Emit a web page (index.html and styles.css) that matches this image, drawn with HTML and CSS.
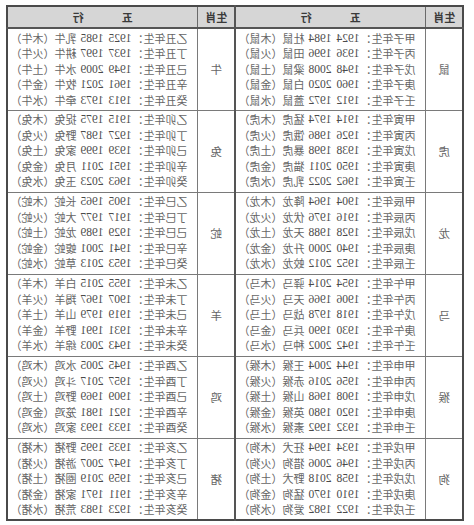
FILE: index.html
```html
<!DOCTYPE html>
<html lang="zh">
<head>
<meta charset="utf-8">
<title>生肖五行</title>
<link rel="stylesheet" href="styles.css">
</head>
<body>
<div class="sheet">
<table class="grid">
<colgroup><col class="c-z"><col class="c-l"><col class="c-z"><col class="c-l"></colgroup>
<thead>
<tr><th>生肖</th><th class="wx">五<span class="sp"></span>行</th><th class="split">生肖</th><th class="wx">五<span class="sp"></span>行</th></tr>
</thead>
<tbody>
<tr class="data">
<td class="zodiac">鼠</td>
<td class="list">
<div class="line"><span>甲子年生：</span><span class="n">1924</span><span class="n">1984</span><span>杜鼠（木鼠）</span></div>
<div class="line"><span>丙子年生：</span><span class="n">1936</span><span class="n">1996</span><span>田鼠（火鼠）</span></div>
<div class="line"><span>戊子年生：</span><span class="n">1948</span><span class="n">2008</span><span>粱鼠（土鼠）</span></div>
<div class="line"><span>庚子年生：</span><span class="n">1960</span><span class="n">2020</span><span>白鼠（金鼠）</span></div>
<div class="line"><span>壬子年生：</span><span class="n">1912</span><span class="n">1972</span><span>蓋鼠（水鼠）</span></div>
</td>
<td class="zodiac split">牛</td>
<td class="list">
<div class="line"><span>乙丑年生：</span><span class="n">1925</span><span class="n">1985</span><span>乳牛（木牛）</span></div>
<div class="line"><span>丁丑年生：</span><span class="n">1937</span><span class="n">1997</span><span>耕牛（火牛）</span></div>
<div class="line"><span>己丑年生：</span><span class="n">1949</span><span class="n">2009</span><span>水牛（土牛）</span></div>
<div class="line"><span>辛丑年生：</span><span class="n">1961</span><span class="n">2021</span><span>牧牛（金牛）</span></div>
<div class="line"><span>癸丑年生：</span><span class="n">1913</span><span class="n">1973</span><span>牵牛（水牛）</span></div>
</td>
</tr>
<tr class="data">
<td class="zodiac">虎</td>
<td class="list">
<div class="line"><span>甲寅年生：</span><span class="n">1914</span><span class="n">1974</span><span>猛虎（木虎）</span></div>
<div class="line"><span>丙寅年生：</span><span class="n">1926</span><span class="n">1986</span><span>饿虎（火虎）</span></div>
<div class="line"><span>戊寅年生：</span><span class="n">1938</span><span class="n">1998</span><span>暴虎（土虎）</span></div>
<div class="line"><span>庚寅年生：</span><span class="n">1950</span><span class="n">2011</span><span>猫虎（金虎）</span></div>
<div class="line"><span>壬寅年生：</span><span class="n">1962</span><span class="n">2022</span><span>乳虎（水虎）</span></div>
</td>
<td class="zodiac split">兔</td>
<td class="list">
<div class="line"><span>乙卯年生：</span><span class="n">1915</span><span class="n">1975</span><span>捉兔（木兔）</span></div>
<div class="line"><span>丁卯年生：</span><span class="n">1927</span><span class="n">1987</span><span>野兔（火兔）</span></div>
<div class="line"><span>己卯年生：</span><span class="n">1939</span><span class="n">1999</span><span>家兔（土兔）</span></div>
<div class="line"><span>辛卯年生：</span><span class="n">1951</span><span class="n">2011</span><span>月兔（金兔）</span></div>
<div class="line"><span>癸卯年生：</span><span class="n">1963</span><span class="n">2023</span><span>玉兔（水兔）</span></div>
</td>
</tr>
<tr class="data">
<td class="zodiac">龙</td>
<td class="list">
<div class="line"><span>甲辰年生：</span><span class="n">1904</span><span class="n">1964</span><span>降龙（木龙）</span></div>
<div class="line"><span>丙辰年生：</span><span class="n">1916</span><span class="n">1976</span><span>伏龙（火龙）</span></div>
<div class="line"><span>戊辰年生：</span><span class="n">1928</span><span class="n">1988</span><span>天龙（土龙）</span></div>
<div class="line"><span>庚辰年生：</span><span class="n">1940</span><span class="n">2000</span><span>升龙（金龙）</span></div>
<div class="line"><span>壬辰年生：</span><span class="n">1952</span><span class="n">2012</span><span>蛟龙（水龙）</span></div>
</td>
<td class="zodiac split">蛇</td>
<td class="list">
<div class="line"><span>乙巳年生：</span><span class="n">1905</span><span class="n">1965</span><span>长蛇（木蛇）</span></div>
<div class="line"><span>丁巳年生：</span><span class="n">1917</span><span class="n">1977</span><span>大蛇（火蛇）</span></div>
<div class="line"><span>己巳年生：</span><span class="n">1929</span><span class="n">1989</span><span>龙蛇（土蛇）</span></div>
<div class="line"><span>辛巳年生：</span><span class="n">1941</span><span class="n">2001</span><span>蝮蛇（金蛇）</span></div>
<div class="line"><span>癸巳年生：</span><span class="n">1953</span><span class="n">2013</span><span>草蛇（水蛇）</span></div>
</td>
</tr>
<tr class="data">
<td class="zodiac">马</td>
<td class="list">
<div class="line"><span>甲午年生：</span><span class="n">1954</span><span class="n">2014</span><span>驿马（木马）</span></div>
<div class="line"><span>丙午年生：</span><span class="n">1906</span><span class="n">1966</span><span>天马（火马）</span></div>
<div class="line"><span>戊午年生：</span><span class="n">1918</span><span class="n">1978</span><span>战马（土马）</span></div>
<div class="line"><span>庚午年生：</span><span class="n">1930</span><span class="n">1990</span><span>兵马（金马）</span></div>
<div class="line"><span>壬午年生：</span><span class="n">1942</span><span class="n">2002</span><span>种马（水马）</span></div>
</td>
<td class="zodiac split">羊</td>
<td class="list">
<div class="line"><span>乙未年生：</span><span class="n">1955</span><span class="n">2015</span><span>白羊（木羊）</span></div>
<div class="line"><span>丁未年生：</span><span class="n">1907</span><span class="n">1967</span><span>羯羊（火羊）</span></div>
<div class="line"><span>己未年生：</span><span class="n">1919</span><span class="n">1979</span><span>山羊（土羊）</span></div>
<div class="line"><span>辛未年生：</span><span class="n">1931</span><span class="n">1991</span><span>野羊（金羊）</span></div>
<div class="line"><span>癸未年生：</span><span class="n">1943</span><span class="n">2003</span><span>绵羊（水羊）</span></div>
</td>
</tr>
<tr class="data">
<td class="zodiac">猴</td>
<td class="list">
<div class="line"><span>甲申年生：</span><span class="n">1944</span><span class="n">2004</span><span>王猴（木猴）</span></div>
<div class="line"><span>丙申年生：</span><span class="n">1956</span><span class="n">2016</span><span>赤猴（火猴）</span></div>
<div class="line"><span>戊申年生：</span><span class="n">1908</span><span class="n">1968</span><span>山猴（土猴）</span></div>
<div class="line"><span>庚申年生：</span><span class="n">1920</span><span class="n">1980</span><span>英猴（金猴）</span></div>
<div class="line"><span>壬申年生：</span><span class="n">1932</span><span class="n">1992</span><span>素猴（水猴）</span></div>
</td>
<td class="zodiac split">鸡</td>
<td class="list">
<div class="line"><span>乙酉年生：</span><span class="n">1945</span><span class="n">2005</span><span>水鸡（木鸡）</span></div>
<div class="line"><span>丁酉年生：</span><span class="n">1957</span><span class="n">2017</span><span>斗鸡（火鸡）</span></div>
<div class="line"><span>己酉年生：</span><span class="n">1909</span><span class="n">1969</span><span>野鸡（土鸡）</span></div>
<div class="line"><span>辛酉年生：</span><span class="n">1921</span><span class="n">1981</span><span>笼鸡（金鸡）</span></div>
<div class="line"><span>癸酉年生：</span><span class="n">1933</span><span class="n">1993</span><span>家鸡（水鸡）</span></div>
</td>
</tr>
<tr class="data">
<td class="zodiac">狗</td>
<td class="list">
<div class="line"><span>甲戌年生：</span><span class="n">1934</span><span class="n">1994</span><span>狂犬（木狗）</span></div>
<div class="line"><span>丙戌年生：</span><span class="n">1946</span><span class="n">2006</span><span>猎狗（火狗）</span></div>
<div class="line"><span>戊戌年生：</span><span class="n">1958</span><span class="n">2018</span><span>野犬（土狗）</span></div>
<div class="line"><span>庚戌年生：</span><span class="n">1910</span><span class="n">1970</span><span>猛狗（金狗）</span></div>
<div class="line"><span>壬戌年生：</span><span class="n">1922</span><span class="n">1982</span><span>爱狗（水狗）</span></div>
</td>
<td class="zodiac split">猪</td>
<td class="list">
<div class="line"><span>乙亥年生：</span><span class="n">1935</span><span class="n">1995</span><span>野猪（木猪）</span></div>
<div class="line"><span>丁亥年生：</span><span class="n">1947</span><span class="n">2007</span><span>游猪（火猪）</span></div>
<div class="line"><span>己亥年生：</span><span class="n">1959</span><span class="n">2019</span><span>圈猪（土猪）</span></div>
<div class="line"><span>辛亥年生：</span><span class="n">1911</span><span class="n">1971</span><span>家猪（金猪）</span></div>
<div class="line"><span>癸亥年生：</span><span class="n">1923</span><span class="n">1983</span><span>荒猪（水猪）</span></div>
</td>
</tr>
</tbody>
</table>
</div>
</body>
</html>
```
FILE: styles.css
```css
html, body {
  margin: 0;
  padding: 0;
  background: #ffffff;
}

.sheet {
  margin: 5px 0 0 8px;
  width: 456px;
  transform: scaleX(-1);
  font-family: "Liberation Serif", "Noto Sans CJK SC", serif;
}

.grid {
  width: 456px;
  table-layout: fixed;
  border-collapse: collapse;
  border: 2px solid #4a4a4a;
}

.c-z { width: 37px; }
.c-l { width: 191px; }

.grid th {
  height: 20px;
  padding: 0;
  background: #d6d6d6;
  border: 1px solid #6a6a6a;
  border-bottom: 2px solid #555555;
  font-family: "Noto Sans CJK SC", sans-serif;
  font-size: 11px;
  font-weight: bold;
  color: #3a3a3a;
  text-align: center;
  vertical-align: middle;
}

.grid .sp {
  display: inline-block;
  width: 38px;
}

.grid td {
  padding: 0;
  border: 1px solid #7a7a7a;
  vertical-align: middle;
}

.grid .split {
  border-left: 2px solid #555555;
}

.data {
  height: 82px;
}

.grid .zodiac {
  text-align: center;
  font-family: "Noto Sans CJK SC", sans-serif;
  font-size: 11.5px;
  color: #666666;
}

.grid .list {
  padding-left: 10px;
}

.line {
  display: grid;
  grid-template-columns: 56px 28px 27px 66px;
  height: 15.5px;
  line-height: 15.5px;
  font-size: 11px;
  color: #666666;
  white-space: nowrap;
  overflow: visible;
}

.line span {
  font-family: "Noto Sans CJK SC", sans-serif;
  white-space: nowrap;
}

.line .n {
  font-family: "Liberation Serif", serif;
  font-size: 11.5px;
  color: #4a4a4a;
}
```
